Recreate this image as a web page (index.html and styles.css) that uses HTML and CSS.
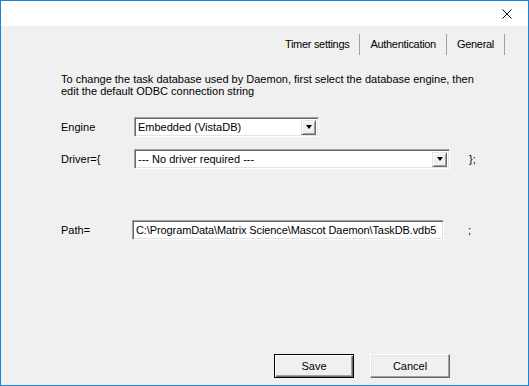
FILE: index.html
```html
<!DOCTYPE html>
<html>
<head>
<meta charset="utf-8">
<link rel="stylesheet" href="styles.css">
</head>
<body>
<div class="window">
  <div class="titlebar">
    <svg class="close" width="10" height="10" viewBox="0 0 10 10"><path d="M0.5 0.5 L9.5 9.5 M9.5 0.5 L0.5 9.5" stroke="#000" stroke-width="1" fill="none"/></svg>
  </div>
  <div class="client">
    <nav class="tabs">
      <span class="tab">Timer settings</span>
      <span class="tab">Authentication</span>
      <span class="tab">General</span>
    </nav>
    <p class="intro">To change the task database used by Daemon, first select the database engine, then<br>edit the default ODBC connection string</p>
    <div class="row row-engine">
      <span class="label">Engine</span>
      <div class="combo combo-engine"><span class="value">Embedded (VistaDB)</span><span class="drop"><i class="tri"></i></span></div>
    </div>
    <div class="row row-driver">
      <span class="label">Driver={</span>
      <div class="combo combo-driver"><span class="value">--- No driver required ---</span><span class="drop"><i class="tri"></i></span></div>
      <span class="suffix suffix-driver">};</span>
    </div>
    <div class="row row-path">
      <span class="label label-path">Path=</span>
      <div class="textbox">C:\ProgramData\Matrix Science\Mascot Daemon\TaskDB.vdb5</div>
      <span class="suffix suffix-path">;</span>
    </div>
    <div class="buttons">
      <button class="btn btn-default">Save</button>
      <button class="btn">Cancel</button>
    </div>
  </div>
</div>
</body>
</html>
```
FILE: styles.css
```css
* { box-sizing: border-box; }
html, body { margin: 0; padding: 0; }
body {
  font-family: "Liberation Sans", Arial, sans-serif;
  font-size: 11px;
  color: #000;
  background: #fff;
}
.window {
  width: 529px;
  height: 386px;
  border: 1px solid #1883d7;
  display: flex;
  flex-direction: column;
  background: #f0f0f0;
}
.titlebar {
  height: 25px;
  background: #fff;
  display: flex;
  justify-content: flex-end;
  align-items: flex-start;
  padding: 8px 16px 0 0;
  flex: none;
}
.close { display: block; }
.client {
  flex: 1;
  display: flex;
  flex-direction: column;
  padding: 0 0 7px 60px;
}
.tabs {
  display: flex;
  justify-content: flex-end;
  margin-top: 8px;
  padding-right: 23px;
  height: 21px;
}
.tab {
  display: flex;
  align-items: center;
  padding: 0 10px 0 10px;
  border-right: 1px solid #a0a0a0;
  line-height: 13px;
  letter-spacing: -0.3px;
}
.intro {
  margin: 18px 0 0 0;
  line-height: 12px;
}
.row {
  display: flex;
  align-items: center;
}
.row-engine { margin-top: 20px; }
.row-driver { margin-top: 12px; }
.row-path { margin-top: 51px; }
.label { width: 73px; flex: none; }
.label-path { width: 71px; }
.combo {
  height: 20px;
  background: #fff;
  border: 1px solid;
  border-color: #a0a0a0 #fff #fff #a0a0a0;
  box-shadow: inset 1px 1px 0 #696969, inset -1px -1px 0 #e3e3e3;
  display: flex;
  align-items: center;
  padding: 0 2px 0 3px;
}
.combo-engine { width: 185px; }
.combo-driver { width: 316px; }
.value { flex: 1; white-space: nowrap; }
.drop {
  width: 15px;
  height: 15px;
  background: #f0f0f0;
  border: 1px solid;
  border-color: #e3e3e3 #696969 #696969 #e3e3e3;
  box-shadow: inset 1px 1px 0 #fff, inset -1px -1px 0 #a0a0a0;
  display: flex;
  align-items: center;
  justify-content: center;
}
.tri {
  width: 0;
  height: 0;
  border-left: 3.5px solid transparent;
  border-right: 3.5px solid transparent;
  border-top: 4px solid #000;
}
.suffix-driver { margin-left: 19px; }
.suffix-path { margin-left: 24px; }
.textbox {
  width: 312px;
  height: 20px;
  background: #fff;
  border: 1px solid;
  border-color: #a0a0a0 #fff #fff #a0a0a0;
  box-shadow: inset 1px 1px 0 #696969, inset -1px -1px 0 #e3e3e3;
  padding: 0 0 0 3px;
  display: flex;
  align-items: center;
  white-space: nowrap;
  letter-spacing: -0.1px;
}
.buttons {
  margin-top: auto;
  display: flex;
  justify-content: flex-end;
  gap: 16px;
  padding-right: 78px;
}
.btn {
  width: 80px;
  height: 24px;
  font: inherit;
  color: #000;
  background: #f0f0f0;
  border: 1px solid;
  border-color: #fff #696969 #696969 #fff;
  box-shadow: inset -1px -1px 0 #a0a0a0, inset 1px 1px 0 #e3e3e3;
  padding: 0;
}
.btn-default {
  border: 1px solid #000;
  box-shadow: inset 1px 1px 0 #fff, inset -1px -1px 0 #696969, inset -2px -2px 0 #a0a0a0;
}
```
